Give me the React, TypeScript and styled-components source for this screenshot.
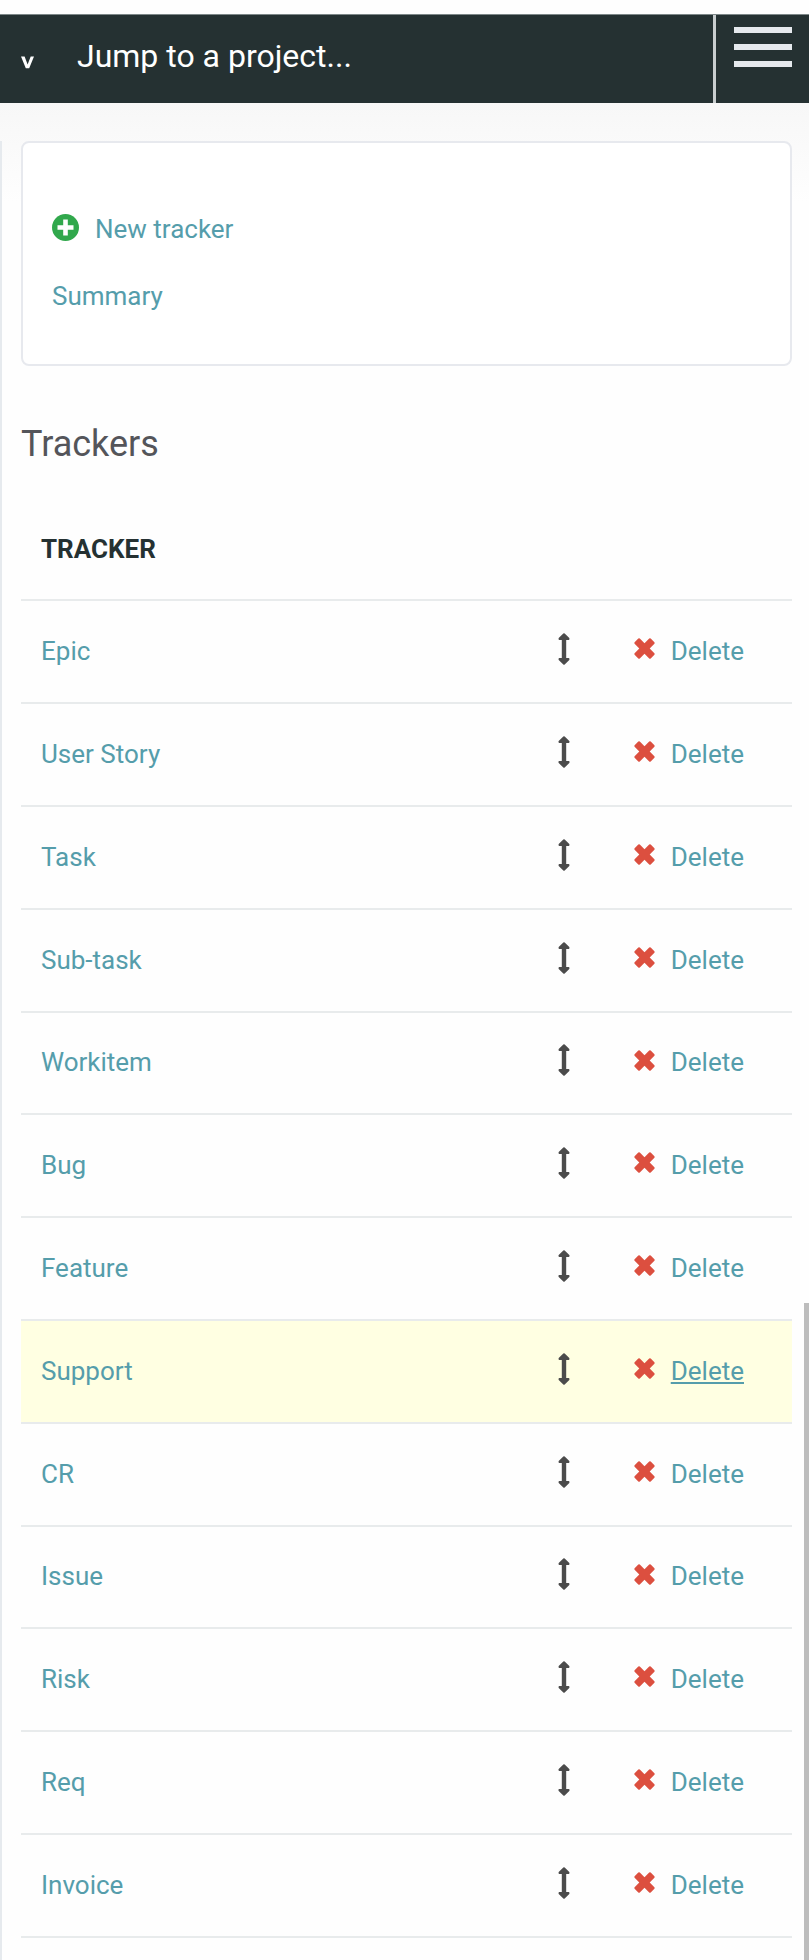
import React from "react";
import styled, { createGlobalStyle } from "styled-components";

const GlobalStyle = createGlobalStyle`
  * { box-sizing: border-box; }
  body {
    margin: 0;
    background: #fefefe;
    font-family: Roboto, "Liberation Sans", sans-serif;
    font-size: 26px;
    line-height: 32px;
    color: #54555a;
  }
`;

const Page = styled.div`
  position: relative;
  display: flex;
  flex-direction: column;
  min-height: 100vh;
  padding-top: 14px;
`;

const TopBar = styled.header`
  display: flex;
  height: 89px;
  background: #253132;
  border-top: 1px solid #7d8788;
`;

const ProjectJump = styled.button`
  flex: 1;
  display: flex;
  align-items: center;
  gap: 42px;
  padding: 0 20px 6px;
  border: 0;
  background: none;
  color: #fff;
  font: inherit;
  font-size: 32px;
  text-align: left;
  cursor: pointer;

  svg {
    margin-top: 12px;
  }
`;

const MenuButton = styled.button`
  display: flex;
  flex-direction: column;
  gap: 11px;
  padding: 12px 17px 0 18px;
  border: 0;
  border-left: 3px solid #c9cecf;
  background: none;
  cursor: pointer;
`;

const MenuBar = styled.span`
  width: 58px;
  height: 6px;
  background: #e5e9ed;
`;

const Body = styled.div`
  flex: 1;
  display: flex;
  flex-direction: column;
  padding-top: 38px;
  background: linear-gradient(#f7f7f7, #fefefe 100px);
`;

const Content = styled.main`
  flex: 1;
  padding: 0 17px 20px 19px;
  border-left: 2px solid #e6eaee;
`;

const Contextual = styled.nav`
  display: flex;
  flex-direction: column;
  align-items: flex-start;
  gap: 35px;
  padding: 70px 29px 52px;
  border: 2px solid #e7e9ee;
  border-radius: 8px;
  background: #fff;
`;

const TextLink = styled.a<{ $active?: boolean }>`
  display: inline-flex;
  align-items: center;
  gap: 16px;
  color: #559dab;
  text-decoration: ${(p) => (p.$active ? "underline" : "none")};
  text-decoration-thickness: 2px;
  text-underline-offset: 2px;

  svg {
    margin-bottom: 4px;
  }
`;

const Title = styled.h2`
  margin: 56px 0 0;
  font-size: 36px;
  line-height: 44px;
  font-weight: 400;
`;

const TrackerTable = styled.table`
  width: 100%;
  margin-top: 31px;
  border-collapse: separate;
  border-spacing: 0;
`;

const HeadCell = styled.th`
  height: 104px;
  padding: 2px 20px 0;
  border-bottom: 2px solid #e8ebec;
  color: #253132;
  font-weight: 700;
  text-align: left;
`;

const Cell = styled.td`
  height: 103px;
  padding: 0 20px 2px;
  border-bottom: 2px solid #e8ebec;
`;

const Row = styled.tr<{ $active?: boolean }>`
  background: ${(p) => (p.$active ? "#ffffe2" : "transparent")};

  &:nth-child(5n) ${Cell} {
    height: 102px;
  }
`;

const Actions = styled.div`
  display: flex;
  justify-content: flex-end;
  align-items: center;
  gap: 64px;
  padding-right: 28px;
`;

const SortHandle = styled.button`
  display: flex;
  padding: 0 0 4px;
  border: 0;
  background: none;
  color: #4b4b4b;
  cursor: move;
`;

const ScrollThumb = styled.div`
  position: absolute;
  top: 1303px;
  right: 0;
  bottom: 0;
  width: 5px;
  background: #bdbdbd;
`;

const ChevronIcon = () => (
  <svg width="15" height="13" viewBox="0 0 15 13" fill="#fff" aria-hidden="true">
    <path d="M1 .5h3.600l3 7.900 3.100-7.900H14L9.200 12.300H5.800z" />
  </svg>
);

const AddIcon = () => (
  <svg width="27" height="27" viewBox="0 0 27 27" aria-hidden="true">
    <circle cx="13.500" cy="13.500" r="13.500" fill="#31a84c" />
    <path d="M13.500 7.800v11.400M7.800 13.500h11.400" stroke="#fff" strokeWidth="4.600" strokeLinecap="square" strokeLinejoin="round" />
  </svg>
);

const SortIcon = () => (
  <svg width="12" height="32" viewBox="0 0 12 32" fill="currentColor" aria-hidden="true">
    <path d="M5.300.5Q6 0 6.700.5L11.300 5.100Q12 6.600 10.800 7H8.200v18h2.600Q12 25.400 11.300 26.900L6.700 31.500Q6 32 5.300 31.500L.7 26.900Q0 25.400 1.200 25H3.800V7H1.200Q0 6.600.7 5.100z" />
  </svg>
);

const DeleteIcon = () => (
  <svg width="21" height="21" viewBox="0 0 21 21" fill="#dc4f3f" aria-hidden="true">
    <path d="M4.300.6Q5 0 5.800.6L10.500 5.300 15.200.6Q16 0 16.700.6L20.400 4.300Q21 5 20.400 5.800L15.700 10.500 20.400 15.200Q21 16 20.400 16.700L16.700 20.400Q16 21 15.200 20.400L10.500 15.700 5.800 20.400Q5 21 4.300 20.400L.6 16.700Q0 16 .6 15.200L5.300 10.500.6 5.800Q0 5 .6 4.300z" />
  </svg>
);

const trackers = [
  "Epic",
  "User Story",
  "Task",
  "Sub-task",
  "Workitem",
  "Bug",
  "Feature",
  "Support",
  "CR",
  "Issue",
  "Risk",
  "Req",
  "Invoice",
];

const activeTracker = "Support";

export default function App() {
  return (
    <>
      <GlobalStyle />
      <Page>
        <TopBar>
          <ProjectJump type="button">
            <ChevronIcon />
            <span>Jump to a project...</span>
          </ProjectJump>
          <MenuButton type="button" aria-label="Menu">
            <MenuBar />
            <MenuBar />
            <MenuBar />
          </MenuButton>
        </TopBar>
        <Body>
          <Content>
            <Contextual>
              <TextLink href="#new">
                <AddIcon />
                <span>New tracker</span>
              </TextLink>
              <TextLink href="#summary">Summary</TextLink>
            </Contextual>
            <Title>Trackers</Title>
            <TrackerTable>
              <thead>
                <tr>
                  <HeadCell scope="col" colSpan={2}>TRACKER</HeadCell>
                </tr>
              </thead>
              <tbody>
                {trackers.map((name) => {
                  const active = name === activeTracker;
                  return (
                    <Row key={name} $active={active}>
                      <Cell>
                        <TextLink href="#edit">{name}</TextLink>
                      </Cell>
                      <Cell>
                        <Actions>
                          <SortHandle type="button" aria-label={`Sort ${name}`}>
                            <SortIcon />
                          </SortHandle>
                          <TextLink href="#delete" $active={active}>
                            <DeleteIcon />
                            <span>Delete</span>
                          </TextLink>
                        </Actions>
                      </Cell>
                    </Row>
                  );
                })}
              </tbody>
            </TrackerTable>
          </Content>
        </Body>
        <ScrollThumb />
      </Page>
    </>
  );
}
